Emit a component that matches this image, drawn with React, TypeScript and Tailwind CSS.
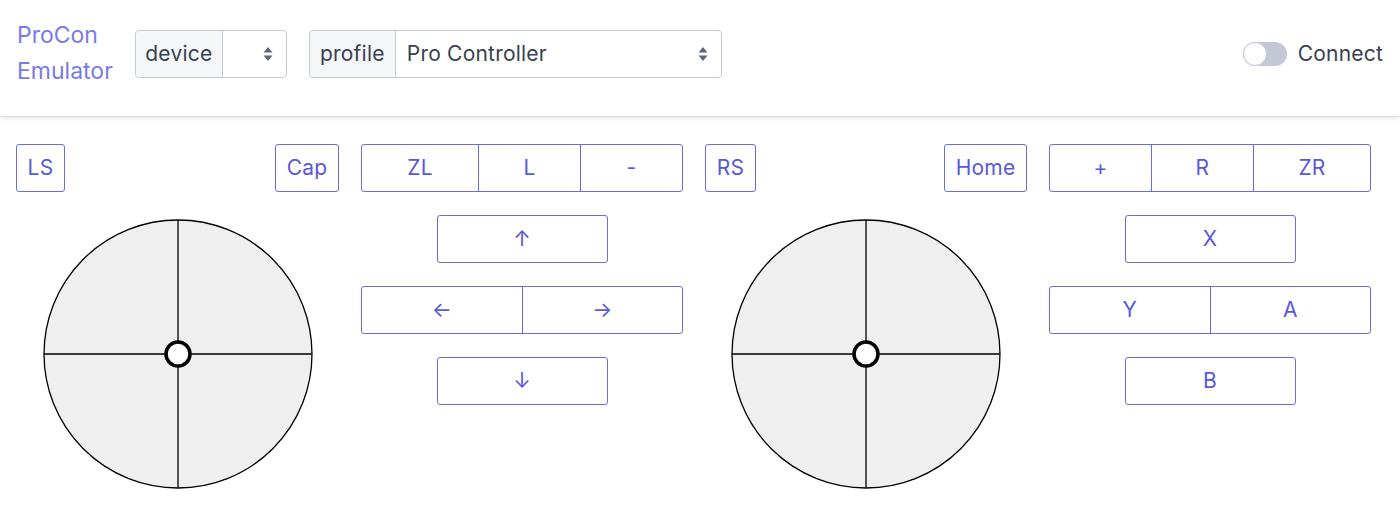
const btn =
  'h-12 border border-[#6b6be6] text-[#5858d8] bg-white rounded-[3px] flex items-center justify-center text-[21px] tracking-[0.01em]';

function Group({ labels, className = '' }: { labels: string[]; className?: string }) {
  return (
    <div className={`flex h-12 rounded-[3px] border border-[#6b6be6] bg-white ${className}`}>
      {labels.map((l, i) => (
        <button
          key={l}
          className={`flex-1 text-[21px] tracking-[0.01em] text-[#5858d8] ${i > 0 ? 'border-l border-[#6b6be6]' : ''}`}
        >
          {l}
        </button>
      ))}
    </div>
  );
}

function Stick() {
  return (
    <svg width="270" height="270" viewBox="0 0 270 270" className="mx-auto">
      <circle cx="135" cy="135" r="134" fill="#efefef" stroke="#000" strokeWidth="1.3" />
      <line x1="1" y1="135" x2="269" y2="135" stroke="#000" strokeWidth="1.3" />
      <line x1="135" y1="1" x2="135" y2="269" stroke="#000" strokeWidth="1.3" />
      <circle cx="135" cy="135" r="12" fill="#fff" stroke="#000" strokeWidth="3.5" />
    </svg>
  );
}

function Select({
  label,
  value,
  labelWidth,
  width,
}: {
  label: string;
  value: string;
  labelWidth: string;
  width: string;
}) {
  return (
    <div className="flex h-12 rounded-[4px] border border-[#c4cad6] text-[21px] tracking-[0.01em] text-[#374151]">
      <div
        className={`flex items-center justify-center bg-[#f5f6f8] border-r border-[#c4cad6] rounded-l-[4px] ${labelWidth}`}
      >
        {label}
      </div>
      <div className={`flex items-center justify-between pl-[11px] pr-[13px] ${width}`}>
        <span>{value}</span>
        <svg width="10" height="16" viewBox="0 0 10 16">
          <path d="M5 1 L9.5 6.5 H0.5 Z" fill="#5f6678" />
          <path d="M5 15 L9.5 9.5 H0.5 Z" fill="#5f6678" />
        </svg>
      </div>
    </div>
  );
}

export default function App() {
  return (
    <div className="min-h-screen bg-white font-['Inter',sans-serif]">
      <header className="flex h-[117px] items-center border-b border-[#dedede] pb-[9px] pl-[17px] pr-[17px] shadow-[0_2px_3px_rgba(0,0,0,0.08)]">
        <div className="mr-[22px] -mt-[1px] text-[23px] leading-[36px] text-[#7a7ae6]">
          ProCon
          <br />
          Emulator
        </div>
        <Select label="device" value="" labelWidth="w-[87px]" width="w-[63px]" />
        <div className="w-[22px]" />
        <Select label="profile" value="Pro Controller" labelWidth="w-[86px]" width="w-[325px]" />
        <div className="flex-1" />
        <div className="flex items-center gap-[11px]">
          <div className="relative h-[24px] w-[44px] rounded-full bg-[#c3c9d4]">
            <div className="absolute left-0 top-0 h-[24px] w-[24px] rounded-full border border-[#c3c9d4] bg-white" />
          </div>
          <span className="text-[21px] tracking-[0.01em] text-[#374151]">Connect</span>
        </div>
      </header>

      <main className="grid grid-cols-[323px_322px_322px_322px] gap-x-[22px] px-4 pt-[27px]">
        {/* left stick column */}
        <div className="flex flex-col">
          <div className="flex justify-between">
            <button className={`${btn} w-[49px]`}>LS</button>
            <button className={`${btn} w-[64px]`}>Cap</button>
          </div>
          <div className="mt-[27px]">
            <Stick />
          </div>
        </div>

        {/* left buttons */}
        <div className="flex flex-col gap-[23px]">
          <Group labels={['ZL', 'L', '-']} className="[&>button:first-child]:flex-[1.15]" />
          <button className={`${btn} mx-auto w-[171px]`}>↑</button>
          <Group labels={['←', '→']} />
          <button className={`${btn} mx-auto w-[171px]`}>↓</button>
        </div>

        {/* right stick column */}
        <div className="flex flex-col">
          <div className="flex justify-between">
            <button className={`${btn} w-[51px]`}>RS</button>
            <button className={`${btn} w-[83px]`}>Home</button>
          </div>
          <div className="mt-[27px]">
            <Stick />
          </div>
        </div>

        {/* right buttons */}
        <div className="flex flex-col gap-[23px]">
          <Group labels={['+', 'R', 'ZR']} className="[&>button:last-child]:flex-[1.15]" />
          <button className={`${btn} mx-auto w-[171px]`}>X</button>
          <Group labels={['Y', 'A']} />
          <button className={`${btn} mx-auto w-[171px]`}>B</button>
        </div>
      </main>
    </div>
  );
}
